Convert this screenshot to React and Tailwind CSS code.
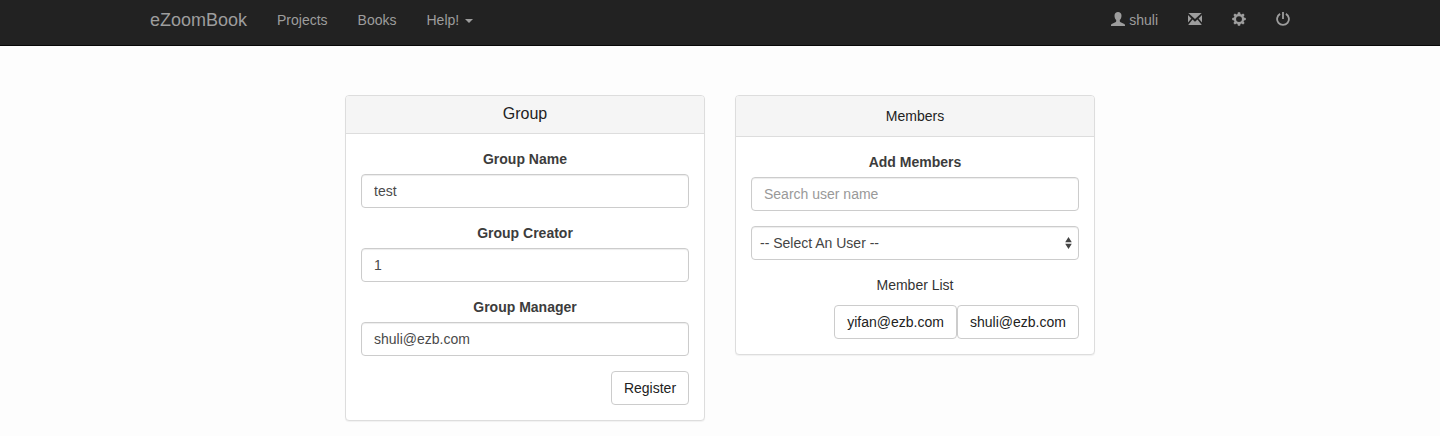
const field =
  "flex h-[34px] w-full rounded-[4px] border border-[#cccccc] bg-white px-3 py-1.5 text-sm leading-5 text-[#4a4a4a] shadow-[inset_0_1px_1px_rgba(0,0,0,0.075)] placeholder:text-[#999999] outline-none";
const button =
  "h-[34px] rounded-[4px] border border-[#cccccc] bg-white text-center text-sm leading-5 text-[#222222]";

function UserIcon() {
  return (
    <svg width="14" height="14" viewBox="0 0 14 14" fill="currentColor">
      <path d="M7 0C5 0 3.500 1.300 3.500 3.700c0 1.900.7 3.500 1.700 4.300v1.300c0 .5-.3.800-.8 1L1.200 11.700C.3 12.100 0 12.500 0 13.200V14h14v-.8c0-.7-.3-1.100-1.200-1.500L9.600 10.300c-.5-.2-.8-.5-.8-1V8c1-.8 1.700-2.400 1.700-4.300C10.500 1.300 9 0 7 0z" />
    </svg>
  );
}

function EnvelopeIcon() {
  return (
    <svg width="14" height="14" viewBox="0 0 14 14" fill="currentColor">
      <path d="M.3 1h13.400L7 7.100zM0 3l3.400 3.600L0 10.600zM14 3v7.600L10.600 6.600zM4.500 7.500L7 9.800l2.500-2.300 4.300 5.500H.2z" />
    </svg>
  );
}

function CogIcon() {
  return (
    <svg width="14" height="14" viewBox="0 0 14 14" fill="currentColor">
      <path
        fillRule="evenodd"
        d="M5.900.3h2.200l.4 1.800 1 .4 1.600-1 1.500 1.500-1 1.600.4 1 1.800.4v2.100l-1.800.4-.4 1 1 1.600-1.500 1.500-1.600-1-1 .4-.4 1.800H5.900l-.4-1.800-1-.4-1.600 1-1.500-1.500 1-1.600-.4-1L.2 8.100V6l1.800-.4.4-1-1-1.600 1.500-1.500 1.600 1 1-.4zM7 4.150a2.950 2.950 0 1 0 0 5.900 2.950 2.950 0 0 0 0-5.900z"
      />
    </svg>
  );
}

function PowerIcon() {
  return (
    <svg width="14" height="14" viewBox="0 0 14 14" fill="none" stroke="currentColor" strokeWidth="1.800">
      <path d="M4.100 1.900A5.900 5.900 0 1 0 9.900 1.900" />
      <path d="M7 0v7" />
    </svg>
  );
}

function Navbar() {
  return (
    <nav className="flex h-[46px] justify-between border-b border-[#080808] bg-[#222222] pl-[150px] pr-[150px] text-sm leading-5 text-[#9d9d9d]">
      <div className="flex h-10 items-center">
        <a className="mr-[30px] w-[97px] whitespace-nowrap text-lg leading-5">eZoomBook</a>
        <a className="mr-[30px]">Projects</a>
        <a className="mr-[30px]">Books</a>
        <a className="flex items-center">
          Help!
          <svg className="ml-[6px] mt-px" width="8" height="4" viewBox="0 0 8 4" fill="currentColor">
            <path d="M0 0h8L4 4z" />
          </svg>
        </a>
      </div>
      <div className="flex h-[38px] items-center">
        <a className="mr-[30px] flex items-center gap-1">
          <UserIcon />
          <span className="pt-[2px]">shuli</span>
        </a>
        <a className="mr-[30px]"><EnvelopeIcon /></a>
        <a className="mr-[30px]"><CogIcon /></a>
        <a><PowerIcon /></a>
      </div>
    </nav>
  );
}

function Panel({ title, headClass, children }) {
  return (
    <section className="w-[360px] rounded-[4px] border border-[#dddddd] bg-white shadow-[0_1px_1px_rgba(0,0,0,0.05)]">
      <h3 className={`rounded-t-[3px] border-b border-[#dddddd] bg-[#f5f5f5] text-center text-[#222222] ${headClass}`}>
        {title}
      </h3>
      <div className="p-[15px]">{children}</div>
    </section>
  );
}

function Field({ label, value }) {
  return (
    <label className="mb-[15px] block">
      <span className="mb-[5px] block text-center text-sm font-bold leading-5 text-[#3c3c3c]">{label}</span>
      <input className={field} defaultValue={value} />
    </label>
  );
}

export default function App() {
  return (
    <div className="h-[436px] overflow-hidden bg-[#fdfdfd] font-['Liberation_Sans',Arial,sans-serif] text-sm text-[#333333]">
      <Navbar />
      <main className="flex items-start justify-center gap-[30px] pt-[49px]">
        <Panel title="Group" headClass="h-[38px] pt-[9px] text-base leading-[18px]">
          <Field label="Group Name" value="test" />
          <Field label="Group Creator" value="1" />
          <Field label="Group Manager" value="shuli@ezb.com" />
          <div className="flex justify-end">
            <button className={`${button} w-[78px]`}>Register</button>
          </div>
        </Panel>
        <Panel title="Members" headClass="h-[41px] py-[10px] text-sm leading-5">
          <label className="mb-[15px] block">
            <span className="mb-[5px] block text-center text-sm font-bold leading-5 text-[#3c3c3c]">Add Members</span>
            <input className={field} placeholder="Search user name" />
          </label>
          <div className="mb-[15px] flex h-[34px] items-center justify-between rounded-[4px] border border-[#cccccc] bg-white pl-2 pr-[6px] text-[#444444] shadow-[inset_0_1px_1px_rgba(0,0,0,0.075)]">
            <span>-- Select An User --</span>
            <svg width="7" height="12" viewBox="0 0 7 12" fill="#444444">
              <path d="M3.500 0L6.800 5.200H.2zM3.500 12L.2 6.800h6.600z" />
            </svg>
          </div>
          <p className="mb-[10px] text-center leading-5">Member List</p>
          <div className="flex justify-end">
            <button className={`${button} w-[123px]`}>yifan@ezb.com</button>
            <button className={`${button} w-[122px]`}>shuli@ezb.com</button>
          </div>
        </Panel>
      </main>
    </div>
  );
}
